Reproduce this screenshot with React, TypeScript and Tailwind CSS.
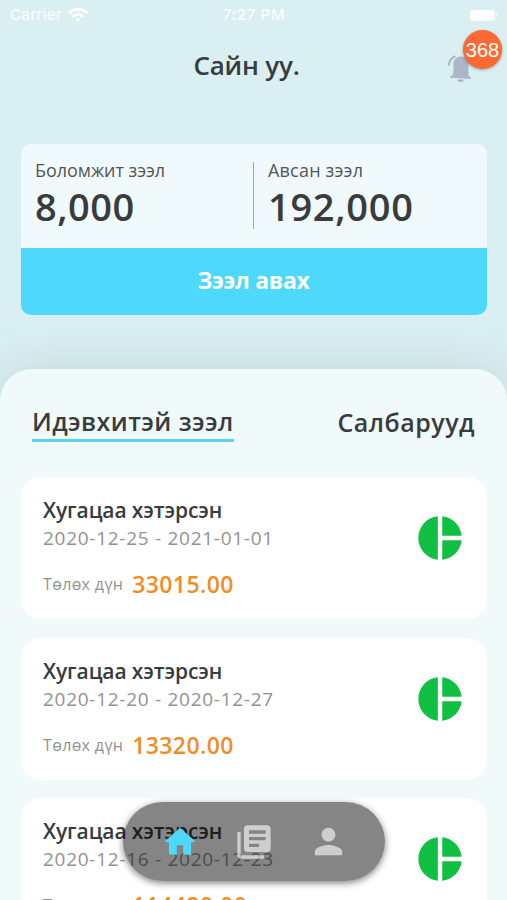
import { MdHome, MdLibraryBooks, MdPerson, MdPieChart, MdWifi } from "react-icons/md";

const loans = [
  { period: "2020-12-25 - 2021-01-01", amount: "33015.00" },
  { period: "2020-12-20 - 2020-12-27", amount: "13320.00" },
  { period: "2020-12-16 - 2020-12-23", amount: "114420.00" },
];

function StatusBar() {
  return (
    <div className="grid h-[30px] grid-cols-3 items-center pl-[10px] pr-[9px] text-[15px] text-white">
      <div className="flex items-center gap-[5px]">
        <span className="font-['Inter',sans-serif] tracking-[0.4px] text-white/90">Carrier</span>
        <MdWifi size={22} />
      </div>
      <span className="text-center font-['Inter',sans-serif] text-[15px] font-medium tracking-[0.7px] text-white/90">
        7:27 PM
      </span>
      <div className="flex items-center justify-end gap-[1px]">
        <span className="h-[11px] w-[25px] rounded-[3px] bg-white" />
        <span className="h-[4px] w-[2px] rounded-r bg-white/60" />
      </div>
    </div>
  );
}

function BellIcon() {
  return (
    <svg viewBox="0 0 26 28" className="h-[28px] w-[26px]" fill="#abb6c9">
      <path d="M14 1.500c-5 .3-7.600 3.500-7.600 8v7.500c0 2-1 3.500-3.200 4.600v1.200L24 24v-1.300c-1.900-1.200-2.600-2.700-2.600-4.700V9.500c0-4.500-2.900-7.700-7.400-8z" />
      <path d="M10.500 24.500h6a3 2.600 0 0 1-6 0z" />
      <path d="M1.800 10.500C2.200 6 4.500 2.700 8.500 1.300" fill="none" stroke="#abb6c9" strokeWidth="2" />
    </svg>
  );
}

function Header() {
  return (
    <header className="relative flex h-[114px] justify-center pr-[14px]">
      <h1 className="mt-[17px] text-[26px] leading-[36px] font-semibold tracking-[-0.2px]">Сайн уу.</h1>
      <div className="absolute top-[25px] left-[447px]">
        <BellIcon />
      </div>
      <span className="absolute top-0 left-[463px] flex size-[39px] items-center justify-center rounded-full bg-[#fd6933] font-['Liberation_Sans',sans-serif] text-[20px] text-white shadow-[0_1px_3px_rgba(0,0,0,0.3)]">
        368
      </span>
    </header>
  );
}

function Balance() {
  return (
    <section className="mr-[20px] ml-[21px] overflow-hidden rounded-[10px] bg-[#f0fafc]">
      <div className="flex h-[104px] pt-[14px] pl-[14px]">
        <div className="w-[218px]">
          <p className="text-[18px] leading-6 tracking-[-0.05px] text-[#555]">Боломжит зээл</p>
          <p className="text-[38px] leading-[49px] font-semibold tracking-[0.5px]">8,000</p>
        </div>
        <div className="mt-[4px] h-[67px] w-[1px] bg-[#9ca6a8]" />
        <div className="pl-[14px]">
          <p className="text-[18px] leading-6 tracking-[0.2px] text-[#555]">Авсан зээл</p>
          <p className="text-[38px] leading-[49px] font-semibold tracking-[0.7px]">192,000</p>
        </div>
      </div>
      <button className="block h-[67px] w-full bg-[#4dd8fc] pr-[1px] pb-[2px] text-[23px] font-bold tracking-[-0.3px] text-white">
        Зээл авах
      </button>
    </section>
  );
}

function LoanCard({ period, amount }: { period: string; amount: string }) {
  return (
    <article className="flex h-[142px] items-start justify-between rounded-[20px] bg-white pt-[19px] pr-[21px] pl-[22px]">
      <div>
        <h2 className="text-[21px] leading-[28px] font-semibold tracking-[-0.1px]">Хугацаа хэтэрсэн</h2>
        <p className="text-[19px] leading-[28px] tracking-[0.72px] text-[#929292]">{period}</p>
        <p className="mt-[16px] flex items-center leading-8">
          <span className="text-[16px] tracking-[0.35px] text-[#929292]">Төлөх дүн</span>
          <span className="ml-[9px] text-[23px] font-semibold tracking-[0.4px] text-[#f18d26]">{amount}</span>
        </p>
      </div>
      <MdPieChart size={52} className="mt-[16px] text-[#10c042]" />
    </article>
  );
}

function TabBar() {
  return (
    <nav className="absolute top-[802px] left-[123px] flex h-[79px] w-[262px] items-center rounded-full bg-black/48 shadow-[0_2px_7px_rgba(0,0,0,0.5)]">
      <MdHome size={38} className="ml-[38px] text-[#4dd8fc]" />
      <MdLibraryBooks size={40} className="ml-[35px] text-white/60" />
      <MdPerson size={41} className="ml-[34px] text-white/60" />
    </nav>
  );
}

export default function App() {
  return (
    <div className="relative h-[900px] w-[507px] overflow-hidden bg-[#daeff1] font-['Open_Sans','Noto_Sans',sans-serif] text-[#393b3c]">
      <StatusBar />
      <Header />
      <Balance />
      <main className="mt-[54px] h-[531px] rounded-t-[32px] bg-[#f0fafb] pr-[20px] pl-[21px] shadow-[0_-6px_40px_rgba(130,155,145,0.22)]">
        <div className="flex h-[108px] items-start justify-between pt-[34px] pr-[12px] pl-[11px] text-[25px] leading-[36px] font-semibold">
          <span className="border-b-[3px] border-[#5cd5ee] tracking-[0.42px]">Идэвхитэй зээл</span>
          <span className="mt-[1px] tracking-[0.5px]">Салбарууд</span>
        </div>
        <div className="flex flex-col gap-[18.5px]">
          {loans.map((loan) => (
            <LoanCard key={loan.period} {...loan} />
          ))}
        </div>
      </main>
      <TabBar />
    </div>
  );
}
